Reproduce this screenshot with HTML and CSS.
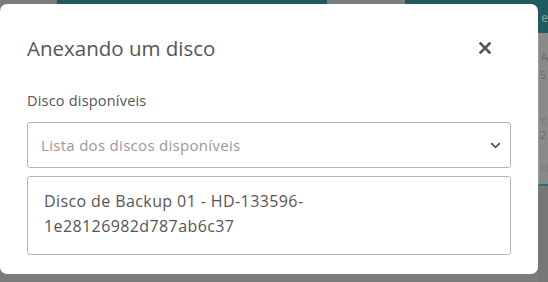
FILE: index.html
```html
<!DOCTYPE html>
<html lang="pt-BR">
<head>
<meta charset="utf-8">
<title>Anexando um disco</title>
<link rel="stylesheet" href="styles.css">
</head>
<body>
<div class="page">
  <div class="topbar">
    <div class="seg seg-gray1"></div>
    <div class="seg seg-teal1"></div>
    <div class="seg seg-gray2"></div>
    <div class="seg seg-teal2"><span class="tb-text">e</span></div>
  </div>
  <div class="side">
    <div class="side-panel">
      <span class="ghost g1">A</span>
      <span class="ghost g2">S</span>
      <span class="ghost g3">c</span>
      <span class="ghost g4">2</span>
      <span class="ghost g5">ol</span>
    </div>
    <div class="side-bottom"></div>
  </div>
</div>

<div class="modal">
  <div class="modal-header">
    <h2 class="modal-title">Anexando um disco</h2>
    <button class="close" aria-label="Fechar">
      <svg width="12" height="12" viewBox="0 0 12 12"><path d="M1.5 1.5 L10.5 10.5 M10.5 1.5 L1.5 10.5" stroke="#555" stroke-width="2.6" stroke-linecap="square"/></svg>
    </button>
  </div>
  <div class="modal-body">
    <label class="label">Disco disponíveis</label>
    <div class="select">
      <span class="placeholder">Lista dos discos disponíveis</span>
      <svg class="chev" width="11" height="7" viewBox="0 0 11 7"><path d="M1.2 1.2 L5.5 5.3 L9.8 1.2" fill="none" stroke="#555" stroke-width="1.8"/></svg>
    </div>
    <div class="list">
      <div class="item">Disco de Backup 01 - HD-133596-<wbr>1e28126982d787ab6c37</div>
    </div>
  </div>
</div>
</body>
</html>
```
FILE: styles.css
```css
* { box-sizing: border-box; }
html, body { margin: 0; padding: 0; }
body {
  width: 548px;
  height: 282px;
  overflow: hidden;
  background: #7b7b7b;
  font-family: "Open Sans", "DejaVu Sans", sans-serif;
  position: relative;
}
.page {
  width: 548px;
  height: 282px;
  display: flex;
  flex-direction: column;
}
.topbar {
  display: flex;
  height: 33px;
}
.seg { height: 100%; }
.seg-gray1 { width: 57px; background: #7b7b7b; }
.seg-teal1 { width: 270px; background: #1f5c5f; }
.seg-gray2 { width: 78px; background: #7d7d7d; border-radius: 0 0 30px 30px; height: 5px; }
.seg-teal2 { flex: 1; background: #1f5c5f; display: flex; justify-content: flex-end; align-items: flex-start; }
.tb-text { color: #7fa7a9; font-size: 12px; padding-top: 9px; margin-right: 0; }
.side {
  flex: 1;
  display: flex;
  flex-direction: column;
  align-items: flex-end;
}
.side-panel {
  width: 10px;
  height: 153px;
  background: #8a8a8a;
  border-left: 1px solid #9a9a9a;
  border-bottom: 2px solid #2a6f71;
  position: relative;
  overflow: hidden;
}
.ghost { position: absolute; color: #6c6c6c; font-size: 11px; left: 2px; }
.g1 { top: 16px; }
.g2 { top: 34px; left: 1px; }
.g3 { top: 79px; }
.g4 { top: 94px; left: 1px; }
.g5 { top: 127px; left: 1px; color: #777; }
.side-bottom { flex: 1; width: 10px; background: #777; }

.modal {
  position: absolute;
  left: 0;
  top: 4px;
  width: 538px;
  height: 270px;
  background: #fff;
  border-radius: 7px;
  padding: 0 27px;
}
.modal-header {
  display: flex;
  justify-content: space-between;
  align-items: center;
  height: 88px;
}
.modal-title {
  margin: 0;
  font-weight: 400;
  font-size: 20.5px;
  color: #555;
}
.close {
  border: 0;
  background: none;
  padding: 0;
  margin-right: 20px;
  display: flex;
  cursor: pointer;
}
.modal-body {
  display: flex;
  flex-direction: column;
}
.label {
  font-size: 14.5px;
  letter-spacing: 0.2px;
  color: #555;
  line-height: 18px;
  margin-bottom: 12px;
  padding-top: 2px;
  margin-top: -2px;
}
.select {
  width: 484px;
  height: 46px;
  border: 1px solid #b5b5b5;
  border-radius: 3px;
  display: flex;
  align-items: center;
  justify-content: space-between;
  padding: 0 9px 0 13px;
}
.placeholder { font-size: 15px; letter-spacing: 0.3px; color: #999; }
.list {
  margin-top: 8px;
  width: 484px;
  height: 79px;
  border: 1px solid #b5b5b5;
  border-radius: 3px;
  padding: 12px 40px 0 16px;
}
.item {
  font-size: 16px;
  letter-spacing: 0.4px;
  color: #555;
  line-height: 25px;
}
```
